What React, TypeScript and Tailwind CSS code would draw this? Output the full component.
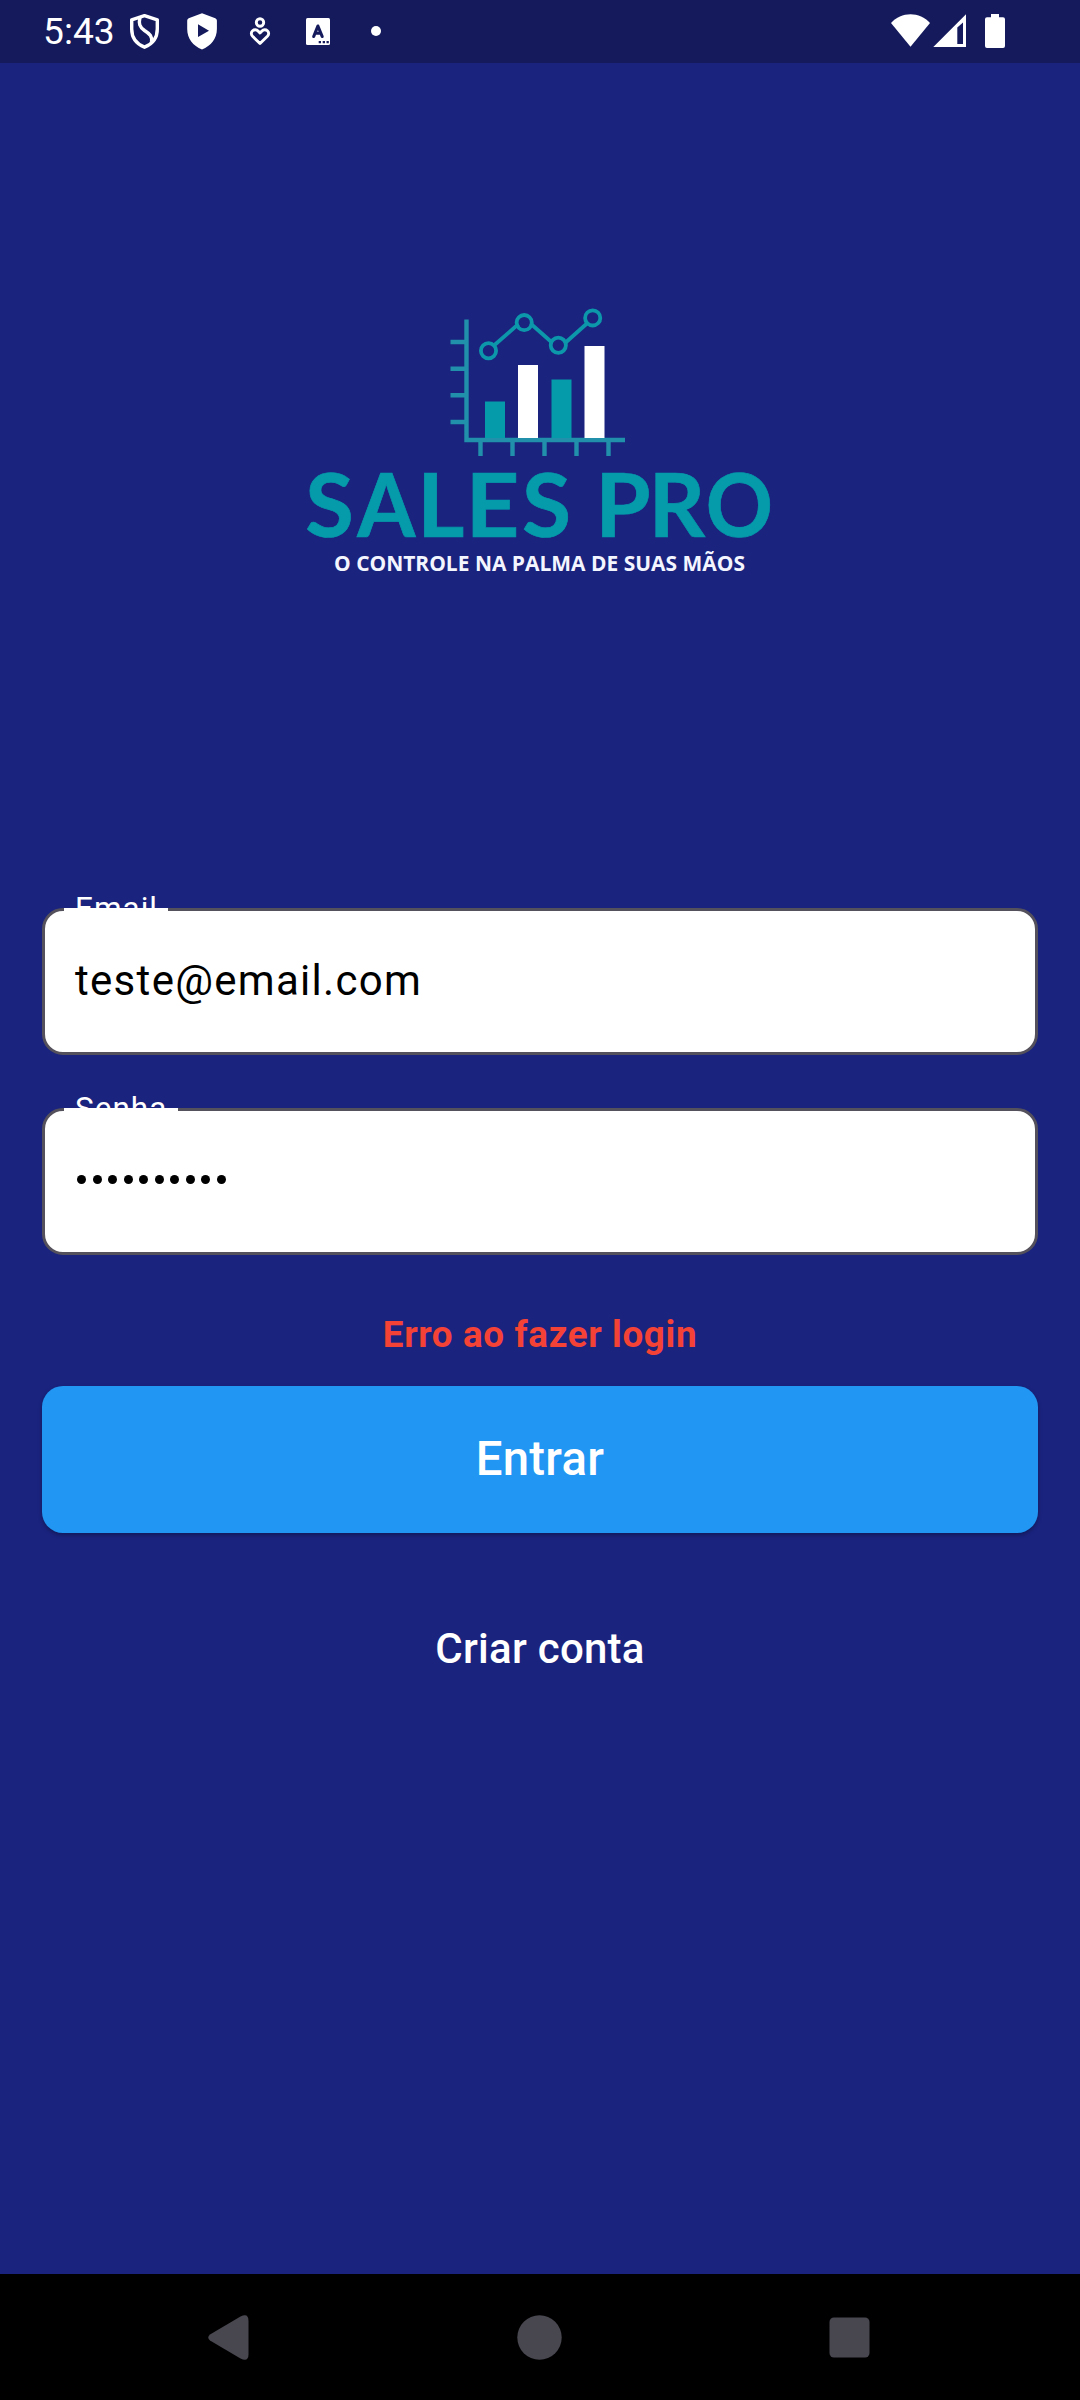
import React from "react";

const TEAL = "#059bab";

// Each wordmark letter: glyph, left position, horizontal scale
const WORDMARK: [string, number, number][] = [
  ["S", 305.3, 1],
  ["A", 357.2, 0.945],
  ["L", 417, 1.03],
  ["E", 465.5, 1.06],
  ["S", 522, 1.01],
  ["P", 595.2, 1.01],
  ["R", 648.7, 0.99],
  ["O", 705.8, 0.94],
];

function StatusIcons() {
  return (
    <svg width="270" height="63" viewBox="120 0 270 63" className="block" fill="#fff">
      <g fill="none" stroke="#fff" strokeWidth="3.4" strokeLinejoin="round">
        <path d="M144.5 15.600 157.300 19.800V29C157.300 37.500 152.500 44 144.500 47.200 136.500 44 131.700 37.500 131.700 29V19.800Z" />
        <path d="M140 16.800C138.500 24 139.500 27 144.500 30.500 150 34 152.500 36.500 151.500 42" />
      </g>
      <path
        fillRule="evenodd"
        d="M202 13.300 215.300 18.300Q216.900 19 216.900 20.600V29C216.900 38.500 211 45.800 202 49.600 193 45.800 187.200 38.500 187.200 29V20.600Q187.200 19 188.700 18.300ZM198 24.300V37L209 30.700Z"
      />
      <g fill="none" stroke="#fff" strokeWidth="2.900">
        <circle cx="260" cy="22.500" r="3.700" />
        <path strokeLinejoin="round" d="M260 43.500 252.600 36.300C248.800 32.300 254.500 27.300 258.300 31.200L260 33 261.700 31.200C265.500 27.300 271.200 32.300 267.400 36.300Z" />
      </g>
      <rect x="306" y="18" width="24" height="27" rx="1.500" />
      <path d="M313.700 36.500 317.900 26 322.200 36.500M315.300 33.300H320.700" fill="none" stroke="#141a5c" strokeWidth="3.100" strokeLinecap="round" strokeLinejoin="round" />
      <path d="M318.700 41h2.300v2.300h-2.300zM322.700 41h2.300v2.300h-2.300zM326.500 41h2.300v2.300h-2.300z" fill="#141a5c" />
      <circle cx="376" cy="31" r="5" />
    </svg>
  );
}

function SystemIcons() {
  return (
    <svg width="120" height="63" viewBox="888 0 120 63" className="block" fill="#fff">
      <path d="M891 23C901 11.300 920 11.300 930 23L910.500 46.700Z" />
      <path fillRule="evenodd" d="M933.300 47 966 14.300V47ZM957.300 27.500V44H963V22.500Z" />
      <path d="M991 14h8v3.300h4q2 0 2 2V46q0 2-2 2h-16q-2 0-2-2V19.300q0-2 2-2h4z" />
    </svg>
  );
}

function Logo() {
  return (
    <svg width="480" height="280" viewBox="300 300 480 280" className="block" role="img" aria-label="Sales Pro">
      <g stroke="#2191ab" strokeWidth="4.400" fill="none">
        <path d="M466.500 319.500V440H625" />
        <path d="M450.500 342h15M450.500 368.700h15M450.500 395.300h15M450.500 422h15" />
        <path d="M480.500 441v15M512.500 441v15M544.500 441v15M576.500 441v15M608.500 441v15" />
      </g>
      <path d="M485 401.500h20V438h-20zM551.500 379.500h20V438h-20z" fill={TEAL} />
      <path d="M518 365h20v73h-20zM584.500 346h20v92h-20z" fill="#fff" />
      <g stroke="#0d97ab" strokeWidth="3.800" fill="none">
        <path d="M494.500 345 518.500 324M530.500 323.500 552 342.500M564.500 343.500 587.500 323" />
        <circle cx="488.500" cy="350.800" r="7.600" />
        <circle cx="524.200" cy="322.600" r="7.600" />
        <circle cx="558.300" cy="345.300" r="7.600" />
        <circle cx="592.700" cy="317.900" r="7.600" />
      </g>
      <g fill={TEAL} stroke={TEAL} strokeWidth="0.700" fontFamily="Lato" fontWeight="700" fontSize="88.500">
        {WORDMARK.map(([letter, x, scale], i) => (
          <text key={i} transform={`translate(${x} 536.500) scale(${scale} 1)`}>
            {letter}
          </text>
        ))}
      </g>
      <text x="334" y="571" fill="#f4f6ff" fontFamily="Open Sans" fontWeight="700" fontSize="20.800" textLength="411" lengthAdjust="spacingAndGlyphs">
        O CONTROLE NA PALMA DE SUAS MÃOS
      </text>
    </svg>
  );
}

function Field({ label, value, notch, dots }: { label: string; value: string; notch: string; dots?: boolean }) {
  return (
    <div className="relative h-[147px] w-[996px] rounded-[21px] border-[3px] border-[#55515c] bg-white">
      <span className={`absolute -top-[3px] left-[19px] h-[3px] bg-white ${notch}`} />
      <span className="absolute -top-[20px] left-[30px] text-[31.5px] leading-[36px] tracking-[1px] text-white">{label}</span>
      <div className="flex h-full items-center pb-[2px] pl-[30px] text-[42px] tracking-[1.3px] text-black">
        {dots ? (
          <span className="flex gap-[6.5px] pb-[1px] pl-[2px]" aria-label={value}>
            {Array.from({ length: 10 }, (_, i) => (
              <span key={i} className="h-[9px] w-[9px] rounded-full bg-black" />
            ))}
          </span>
        ) : (
          <span>{value}</span>
        )}
      </div>
    </div>
  );
}

export default function App() {
  return (
    <div className="flex h-[2400px] w-[1080px] flex-col overflow-hidden bg-[#1a237e] font-['Roboto',sans-serif] text-white">
      <header className="flex h-[63px] items-center bg-[#141a5c]">
        <span className="ml-[43px] w-[77px] text-[37.2px] leading-[63px]">5:43</span>
        <StatusIcons />
        <div className="ml-auto mr-[72px]">
          <SystemIcons />
        </div>
      </header>

      <main className="flex flex-1 flex-col items-center">
        <div className="mt-[237px] h-[608px]">
          <Logo />
        </div>
        <Field label="Email" value="teste@email.com" notch="w-[104px]" />
        <div className="h-[52.5px]" />
        <Field label="Senha" value="Senha" notch="w-[114px]" dots />
        <p className="mt-[52px] h-[79px] pt-[5px] text-[36.75px] font-bold leading-[46px] tracking-[0.65px] text-[#f44336]">Erro ao fazer login</p>
        <button className="h-[147px] w-[996px] rounded-[21px] bg-[#2196f3] text-[47.25px] font-medium tracking-[0.26px] shadow-[0_2px_4px_rgba(0,0,0,0.3)]">Entrar</button>
        <button className="mt-[84px] text-[42px] font-medium leading-[63px] tracking-[0.26px]">Criar conta</button>
      </main>

      <nav className="h-[126px] bg-black">
        <svg width="1080" height="126" viewBox="0 2274 1080 126" fill="#484750">
          <path d="M210 2334.500 240.500 2316.500Q248.500 2312.500 248.500 2321V2354Q248.500 2362.500 240.500 2358.500L210 2340.500Q206.500 2337.500 210 2334.500Z" />
          <circle cx="539.500" cy="2337.500" r="22.200" />
          <rect x="829.500" y="2317.500" width="40" height="40" rx="4.500" />
        </svg>
      </nav>
    </div>
  );
}
